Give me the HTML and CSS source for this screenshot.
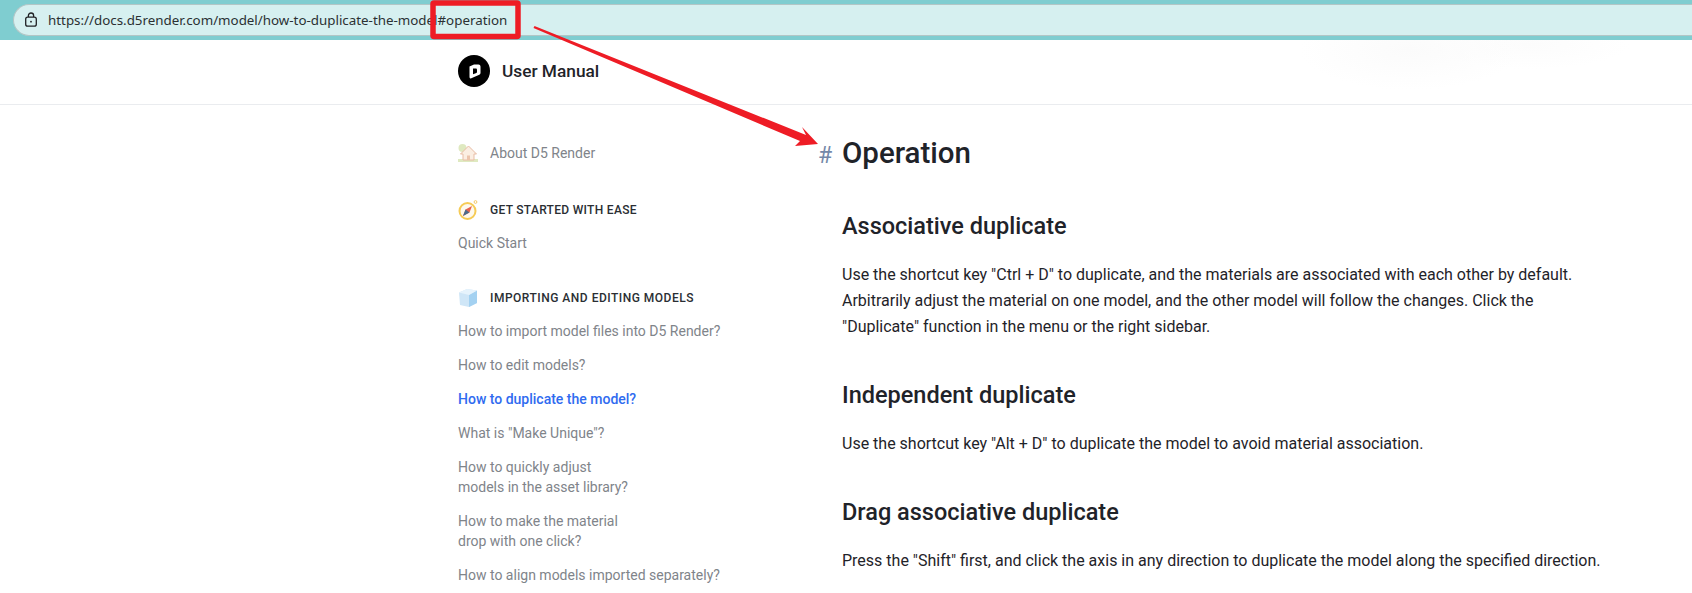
FILE: index.html
```html
<!DOCTYPE html>
<html lang="en">
<head>
<meta charset="utf-8">
<title>How to duplicate the model?</title>
<link rel="stylesheet" href="styles.css">
</head>
<body>
<div class="browser">
  <div class="omnibox">
    <svg class="lock" width="14" height="16" viewBox="0 0 14 16" fill="none" stroke="#202124" stroke-width="1.3"><rect x="1.700" y="5.200" width="10.600" height="9" rx="2"/><path d="M4.400 5V3.600a2.600 2.600 0 0 1 5.200 0V5"/><circle cx="7" cy="9.700" r=".9" fill="#202124" stroke="none"/></svg>
    <span class="url">https://docs.d5render.com/model/how-to-duplicate-the-model#operation</span>
  </div>
</div>
<header class="site-header">
  <div class="brand">
    <svg class="logo" width="32" height="32" viewBox="0 0 32 32"><circle cx="16" cy="16" r="16" fill="#000"/><path d="M11.500 11.500 16 9.500h4.500a2 2 0 0 1 2 2v6.500a2 2 0 0 1-1.200 1.800l-8 3.500a1.300 1.300 0 0 1-1.800-1.200z" fill="#fff"/><path d="M15 13.500h3a1 1 0 0 1 1 1v2.500a1 1 0 0 1-.6.900L15 19.300z" fill="#000"/></svg>
    <span class="brand-name">User Manual</span>
  </div>
</header>
<div class="layout">
  <nav class="sidebar">
    <a class="nav-top">
      <svg class="nav-icon" width="20" height="20" viewBox="0 0 20 20"><circle cx="4.500" cy="5" r="4" fill="#dfe9c0"/><path d="M0 16h20v3H0z" fill="#dfe9c0"/><path d="M10.500 3 2.500 11h2.500v6h11v-6h2.500z" fill="#fbeee2" stroke="#e8bda5" stroke-width="1"/><rect x="9" y="12.500" width="3" height="4.500" fill="#ecc4ac"/></svg>
      <span>About D5 Render</span>
    </a>
    <div class="nav-head first">
      <svg class="nav-icon" width="20" height="20" viewBox="0 0 20 20" fill="none"><circle cx="9.500" cy="11" r="8" stroke="#f6cb55" stroke-width="2" fill="#fdf9ee"/><circle cx="17.500" cy="2" r="1.400" stroke="#f3c869"/><path d="M14 6 11.500 12.500 5 16l2.500-6.500z" fill="#e5604f"/><path d="M5 16 7.500 9.500l4 3z" fill="#4a6d8c"/></svg>
      <span>GET STARTED WITH EASE</span>
    </div>
    <a class="nav-link">Quick Start</a>
    <div class="nav-head second">
      <svg class="nav-icon" width="20" height="20" viewBox="0 0 20 20"><path d="M1 4.500 9 1l10 1.500V15l-8 4-9-2z" fill="#cfe6f7"/><path d="M11 7v12l8-4V2.500z" fill="#a3d1f1"/><path d="M1 4.500 11 7l8-4.500L9 1z" fill="#e6f3fc"/></svg>
      <span>IMPORTING AND EDITING MODELS</span>
    </div>
    <a class="nav-link">How to import model files into D5 Render?</a>
    <a class="nav-link">How to edit models?</a>
    <a class="nav-link active">How to duplicate the model?</a>
    <a class="nav-link">What is "Make Unique"?</a>
    <a class="nav-link">How to quickly adjust<br>models in the asset library?</a>
    <a class="nav-link">How to make the material<br>drop with one click?</a>
    <a class="nav-link">How to align models imported separately?</a>
  </nav>
  <main class="content">
    <h1 class="title"><span class="hash">#</span>Operation</h1>
    <h2 class="sub">Associative duplicate</h2>
    <p class="para">Use the shortcut key "Ctrl + D" to duplicate, and the materials are associated with each other by default. Arbitrarily adjust the material on one model, and the other model will follow the changes. Click the "Duplicate" function in the menu or the right sidebar.</p>
    <h2 class="sub">Independent duplicate</h2>
    <p class="para">Use the shortcut key "Alt + D" to duplicate the model to avoid material association.</p>
    <h2 class="sub">Drag associative duplicate</h2>
    <p class="para">Press the "Shift" first, and click the axis in any direction to duplicate the model along the specified direction.</p>
  </main>
</div>
<svg class="annotation" width="1692" height="593" viewBox="0 0 1692 593">
  <rect x="433" y="3" width="85" height="33.500" fill="none" stroke="#ee1c25" stroke-width="5.500" rx="1"/>
  <path d="M534.500 26 L806 135 L802 127 L818 144 L795 146 L800 141 L533.500 28 Z" fill="#ee1c25"/>
</svg>
</body>
</html>
```
FILE: styles.css
```css
html, body { margin: 0; padding: 0; }
body {
  width: 1692px;
  height: 593px;
  overflow: hidden;
  background: #fff;
  font-family: Roboto, "Liberation Sans", sans-serif;
  position: relative;
}
.browser {
  height: 40px;
  background: #7fcdd0;
  padding-top: 4px;
  box-sizing: border-box;
}
.omnibox {
  height: 32px;
  margin-left: 13px;
  background: #d6f0f0;
  border: 1px solid #b2c6c6;
  border-right: 0;
  border-radius: 16px 0 0 16px;
  display: flex;
  align-items: center;
  padding-left: 10px;
  box-sizing: border-box;
}
.lock { margin-right: 10px; flex: none; }
.url {
  font: 13.350px "Noto Sans", "Open Sans", sans-serif;
  color: #2b3033;
}
.site-header {
  height: 64px;
  border-bottom: 1px solid #eaecef;
  padding-left: 458px;
  display: flex;
  align-items: center;
  background-color: #fff;
  background-image:
    radial-gradient(ellipse 110px 40px at 1410px 10px, #fbfbfb, rgba(255,255,255,0)),
    radial-gradient(ellipse 100px 24px at 1530px 5px, #fcfcfc, rgba(255,255,255,0));
}
.brand { display: flex; align-items: center; gap: 12px; margin-top: -2px; }
.brand-name { font-size: 17.300px; font-weight: 500; color: #1f2329; }
.layout {
  display: flex;
  padding-left: 458px;
}
.sidebar {
  width: 300px;
  flex: none;
  padding-top: 38px;
  font-size: 14px;
  color: #80848a;
}
.nav-top, .nav-head { display: flex; align-items: center; }
.nav-top { height: 20px; }
.nav-icon { width: 20px; height: 20px; margin-right: 12px; flex: none; }
.nav-head {
  color: #2a2e33;
  font-size: 12px;
  font-weight: 500;
  letter-spacing: .5px;
  height: 20px;
}
.nav-head.first { margin-top: 37px; letter-spacing: .3px; }
.nav-head.second { margin-top: 35px; }
.nav-link {
  display: block;
  line-height: 20px;
  margin-top: 14px;
  color: #80848a;
}
.nav-head + .nav-link { margin-top: 13px; }
.nav-link.active { color: #2f6bf0; font-weight: 500; }
.content { width: 765px; margin-left: 84px; color: #1f2329; }
.title {
  font-size: 29.500px;
  font-weight: 500;
  margin: 0;
  padding-top: 30px;
  line-height: 36px;
  position: relative;
}
.hash {
  position: absolute;
  left: -24px;
  font-size: 23px;
  font-weight: 400;
  color: #7488a8;
  top: 33px;
}
.sub { font-size: 23.500px; font-weight: 500; margin: 0; line-height: 30px; padding-top: 40px; }
.para { font-size: 16px; line-height: 26px; margin: 21px 0 0; }
.annotation { position: absolute; left: 0; top: 0; pointer-events: none; }
```
